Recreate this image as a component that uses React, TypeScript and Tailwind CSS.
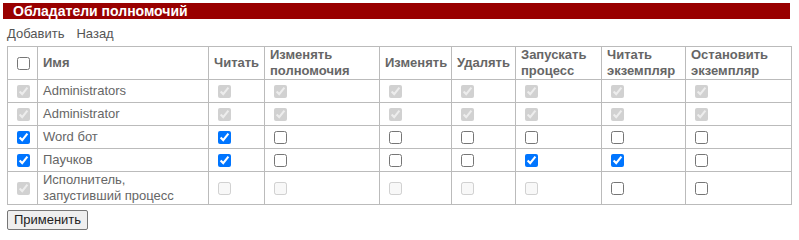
import React from 'react'

const columns = [
  { key: 'read', title: ['Читать'], w: 'w-[56px]' },
  { key: 'perm', title: ['Изменять', 'полномочия'], w: 'w-[115px]' },
  { key: 'edit', title: ['Изменять'], w: 'w-[72px]' },
  { key: 'del', title: ['Удалять'], w: 'w-[64px]' },
  { key: 'run', title: ['Запускать', 'процесс'], w: 'w-[86px]' },
  { key: 'inst', title: ['Читать', 'экземпляр'], w: 'w-[84px]' },
  { key: 'stop', title: ['Остановить', 'экземпляр'], w: 'w-[106px]' },
]

type Cell = { checked: boolean; disabled: boolean }

interface Row {
  name: string[]
  sel: Cell
  cells: Cell[]
}

const lock = (n: number): Cell[] => Array.from({ length: n }, () => ({ checked: true, disabled: true }))
const c = (checked: boolean, disabled = false): Cell => ({ checked, disabled })

const rows: Row[] = [
  { name: ['Administrators'], sel: c(true, true), cells: lock(7) },
  { name: ['Administrator'], sel: c(true, true), cells: lock(7) },
  { name: ['Word бот'], sel: c(true), cells: [c(true), c(false), c(false), c(false), c(false), c(false), c(false)] },
  { name: ['Паучков'], sel: c(true), cells: [c(true), c(false), c(false), c(false), c(true), c(true), c(false)] },
  {
    name: ['Исполнитель,', 'запустивший процесс'],
    sel: c(true, true),
    cells: [c(false, true), c(false, true), c(false, true), c(false, true), c(false, true), c(false), c(false)],
  },
]

function Box({ cell }: { cell: Cell }) {
  return (
    <input
      type="checkbox"
      defaultChecked={cell.checked}
      disabled={cell.disabled}
      className="m-0 ml-[4px] mt-[3px] mb-[3px] w-[13px] h-[13px] align-middle"
    />
  )
}

export default function App() {
  return (
    <div className="w-[799px] h-[238px] bg-white text-[13px] leading-[16px] text-[#666] font-['Liberation_Sans',Arial,sans-serif]">
      <div className="pt-[3px] pl-[3px] pr-[9px]">
        <div className="h-[16px] bg-[#990000] pl-[10px] text-white font-bold text-[14px] leading-[16px]">
          Обладатели полномочий
        </div>
      </div>

      <div className="flex gap-[12px] pl-[7px] pt-[7px] h-[27px] text-[13px] leading-[15px] text-[#555]">
        <span>Добавить</span>
        <span>Назад</span>
      </div>

      <table className="ml-[7px] table-fixed border-collapse border border-[#bbb] w-[785px]">
        <colgroup>
          <col className="w-[30px]" />
          <col className="w-[171px]" />
          {columns.map((col) => (
            <col key={col.key} className={col.w} />
          ))}
        </colgroup>
        <thead>
          <tr className="h-[33px]">
            <th className="border border-[#bbb] px-[5px] py-0 text-left">
              <Box cell={{ checked: false, disabled: false }} />
            </th>
            <th className="border border-[#bbb] px-[5px] py-0 text-left font-bold text-[#666]">Имя</th>
            {columns.map((col) => (
              <th key={col.key} className="border border-[#bbb] px-[5px] py-0 text-left font-bold text-[#666] whitespace-nowrap">
                {col.title.map((t) => (
                  <div key={t}>{t}</div>
                ))}
              </th>
            ))}
          </tr>
        </thead>
        <tbody>
          {rows.map((row) => (
            <tr key={row.name[0]} className={row.name.length > 1 ? 'h-[33px]' : 'h-[23px]'}>
              <td className="border border-[#bbb] px-[5px] py-0">
                <Box cell={row.sel} />
              </td>
              <td className="border border-[#bbb] px-[5px] py-0">
                {row.name.map((t) => (
                  <div key={t}>{t}</div>
                ))}
              </td>
              {row.cells.map((cell, i) => (
                <td key={i} className="border border-[#bbb] px-[5px] py-0">
                  <Box cell={cell} />
                </td>
              ))}
            </tr>
          ))}
        </tbody>
      </table>

      <div className="pl-[7px] pt-[5px]">
        <button className="h-[20px] w-[81px] border border-[#767676] rounded-[2px] bg-[#efefef] text-[#222] text-[13px] leading-[16px]">
          Применить
        </button>
      </div>
    </div>
  )
}
